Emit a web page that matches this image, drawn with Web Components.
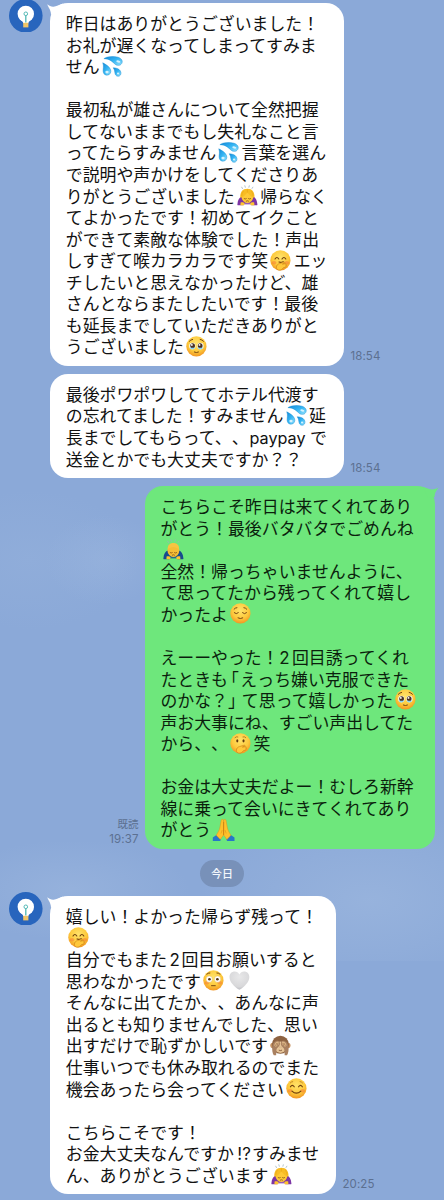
<!DOCTYPE html>
<html lang="ja">
<head>
<meta charset="UTF-8">
<title>トーク</title>
<style>
  body {
    margin: 0;
    width: 444px;
    height: 1200px;
    overflow: hidden;
    background: #8ba9d8;
  }
</style>
</head>
<body>
<chat-room>
  <chat-message avatar tail time="18:54" style="--w: 294.6px">昨日はありがとうございました！<br>お礼が遅くなってしまってすみま<br>せん<emo-ji name="sweat"></emo-ji><br><br>最初私が雄さんについて全然把握<br>してないままでもし失礼なこと言<br>ってたらすみません<emo-ji name="sweat"></emo-ji>言葉を選ん<br>で説明や声かけをしてくださりあ<br>りがとうございました<emo-ji name="bow-woman"></emo-ji>帰らなく<br>てよかったです！初めてイクこと<br>ができて素敵な体験でした！声出<br>しすぎて喉カラカラです笑<emo-ji name="giggle"></emo-ji>エッ<br>チしたいと思えなかったけど、雄<br>さんとならまたしたいです！最後<br>も延長までしていただきありがと<br>うございました<emo-ji name="tearful"></emo-ji></chat-message>
  <chat-message time="18:54" style="--w: 294.6px">最後ポワポワしててホテル代渡す<br>の忘れてました！すみません<emo-ji name="sweat"></emo-ji>延<br>長までしてもらって、、<chat-latin style="--l: 1px; --r: 4.5px; font-size: 16.2px">paypay</chat-latin>で<br>送金とかでも大丈夫ですか？？</chat-message>
  <chat-message mine tail time="19:37" read="既読" style="--w: 290.3px">こちらこそ昨日は来てくれてあり<br>がとう！最後バタバタでごめんね<br><emo-ji name="bow-man"></emo-ji><br>全然！帰っちゃいませんように、<br>て思ってたから残ってくれて嬉し<br>かったよ<emo-ji name="relieved"></emo-ji><br><br>えーーやった！<chat-latin style="--l: .5px; --r: 2.5px">2</chat-latin>回目誘ってくれ<br>たときも<chat-latin style="--l: -6px; --r: 1.5px">「</chat-latin>えっち嫌い克服できた<br>のかな？<chat-latin style="--l: 0px; --r: -3px">」</chat-latin>て思って嬉しかった<emo-ji name="tearful"></emo-ji><br>声お大事にね、すごい声出してた<br>から、、<emo-ji name="gasp"></emo-ji>笑<br><br>お金は大丈夫だよー！むしろ新幹<br>線に乗って会いにきてくれてあり<br>がとう<emo-ji name="pray"></emo-ji></chat-message>
  <chat-date>今日</chat-date>
  <chat-message avatar tail time="20:25" style="--w: 286.6px">嬉しい！よかった帰らず残って！<br><emo-ji name="giggle"></emo-ji><br>自分でもまた<chat-latin style="--l: 2.5px; --r: 1.5px">2</chat-latin>回目お願いすると<br>思わなかったです<emo-ji name="flushed"></emo-ji><emo-ji name="heart"></emo-ji><br>そんなに出てたか、、あんなに声<br>出るとも知りませんでした、思い<br>出すだけで恥ずかしいです<emo-ji name="monkey"></emo-ji><br>仕事いつでも休み取れるのでまた<br>機会あったら会ってください<emo-ji name="smile"></emo-ji><br><br>こちらこそです！<br>お金大丈夫なんですか<chat-latin style="--l: 3.5px; --r: 1.2px">!?</chat-latin>すみませ<br>ん、ありがとうございます<emo-ji name="bow-woman"></emo-ji></chat-message>
</chat-room>

<script>
// ---- emoji drawings, all on a 22x22 canvas ----
const FACE = `
  <defs>
    <radialGradient id="f" cx=".5" cy=".35" r=".68">
      <stop offset="0" stop-color="#ffe36b"/><stop offset=".6" stop-color="#fdc93c"/><stop offset="1" stop-color="#f0901f"/>
    </radialGradient>
  </defs>
  <circle cx="11" cy="11" r="10.7" fill="url(#f)"/>`;

const HAND = `
  <path d="M6.8 18.3c0-2 1.2-3.4 3.2-3.9l5-1.5c.9-.2 1.1.8.3 1.1l-2.2.9 3.4-.4c.9 0 .9 1 .1 1.2 1 0 1 1.2 0 1.3.7.2.6 1-.1 1.1l-2.2.5c-1.2 2-3.2 3-5 2.7-1.7-.3-2.5-1.5-2.5-3z" fill="#ffc83a" stroke="#c77a14" stroke-width=".6"/>`;

const CHEEKS = `<ellipse cx="4.3" cy="13.5" rx="2.5" ry="1.8" fill="#f4653a" opacity=".4"/><ellipse cx="17.7" cy="13.5" rx="2.5" ry="1.8" fill="#f4653a" opacity=".4"/>`;

const bow = (sleeve, hair, face) => `
  <g stroke="#9bb0bb" stroke-width=".8" stroke-linecap="round"><path d="M5 2.3l.8 1.5M8.3.8l.5 1.6M13 .8l-.4 1.6M16.8 2.3l-.9 1.4"/></g>
  <path d="M5.5 12C2.5 13 .8 16 .4 20.5c0 .8.5 1 1.2 1h5.2l2-4zM16.5 12c3 1 4.7 4 5.1 8.5 0 .8-.5 1-1.2 1h-5.2l-2-4z" fill="${sleeve}"/>
  <path d="M6 17h10v3.5H6z" fill="${sleeve}" opacity=".8"/>
  <path d="M3.8 18.6c1.5-.5 3.5-.2 4.2.8l-.5 2H3.6zM18.2 18.6c-1.5-.5-3.5-.2-4.2.8l.5 2h3.9z" fill="#ffc52f"/>
  <ellipse cx="11" cy="11.8" rx="6.3" ry="7.3" fill="${face}"/>
  ${hair}
  <path d="M7.6 14.5q1.1.8 2.2 0M12.2 14.5q1.1.8 2.2 0M9.8 17q1.2-.8 2.4 0" fill="none" stroke="#7b4a13" stroke-width=".8" stroke-linecap="round"/>`;

const EMOJI = {
  sweat: `
    <defs><linearGradient id="d" x1="0" y1="0" x2="1" y2="1"><stop offset="0" stop-color="#1488d8"/><stop offset=".5" stop-color="#35b5f3"/><stop offset="1" stop-color="#95e2fd"/></linearGradient></defs>
    <g fill="url(#d)" stroke="#168ed5" stroke-width=".5">
      <path d="M2 2.8C5 .5 12-.2 17 1.3c4 1.3 5.3 4.3 3.8 6.7-1.6 2.6-5 2.3-7 .6C11 6.2 8.5 3 2 2.8z"/>
      <path d="M.8 7.2c3.2 1.7 7 4 8.2 7 1 2.7-.3 5.5-2.8 6-2.8.6-4.9-1.4-5-4.2-.1-2.8 1-5.3-.4-8.8z"/>
      <path d="M11.8 12.5c3 0 6 .9 7.5 3.1 1.3 2 .9 4.7-1 5.6-2.1.9-4.1-.5-4.5-2.6-.4-2.3-.5-4.5-2-6.1z"/>
    </g>
    <g fill="#e3f8ff" opacity=".9"><ellipse cx="17.3" cy="5.8" rx="2.2" ry="1.2" transform="rotate(15 17.3 5.8)"/><ellipse cx="5.3" cy="17" rx="1.8" ry="1.4"/><ellipse cx="17" cy="18.5" rx="1.2" ry="1"/></g>`,

  'bow-woman': bow('#7d35a5', '<path d="M3.5 13.5C3 7.5 6 4 11 4s8 3.5 7.5 9.5c-2.5-.3-5-2.3-7.5-5.5-2.5 3.2-5 5.2-7.5 5.5z" fill="#f8bd24"/><path d="M11 4.5V8M7 6.5q-2 2-2 5M15 6.5q2 2 2 5" stroke="#e19a13" stroke-width=".5" fill="none"/>', '#ffc936'),
  'bow-man': bow('#174b8e', '<path d="M5 10.5C5 6.5 7.5 4.3 11 4.3s6 2.2 6 6.2c-3-1-4-2-6-2s-3 1-6 2z" fill="#f8c443"/>', '#f6bd36'),

  giggle: FACE + CHEEKS + `
    <path d="M5.3 9.5q2-3.2 4 0M12.7 9.5q2-3.2 4 0M9.6 12.6q2.3 1 4.3-.3" fill="none" stroke="#70400e" stroke-width="1.2" stroke-linecap="round"/>` + HAND,

  gasp: FACE + `
    <ellipse cx="7.7" cy="8.3" rx="1.1" ry="1.8" fill="#60380f"/><ellipse cx="14.3" cy="8.3" rx="1.1" ry="1.8" fill="#60380f"/>
    <path d="M5.3 4.9q1.5-1.5 3-.8M13.7 4.1q1.8-.6 3 .8" fill="none" stroke="#9b6418" stroke-width=".8" stroke-linecap="round"/>` + HAND,

  tearful: FACE + `
    <ellipse cx="6.7" cy="10.7" rx="3.3" ry="3.5" fill="#f5fbff"/><ellipse cx="15.3" cy="10.7" rx="3.3" ry="3.5" fill="#f5fbff"/>
    <ellipse cx="7" cy="10.4" rx="2.5" ry="2.8" fill="#4b3022"/><ellipse cx="15" cy="10.4" rx="2.5" ry="2.8" fill="#4b3022"/>
    <path d="M3.9 11.8q2.9 1.4 5.7 0-.6 2.5-2.9 2.5t-2.8-2.5zM12.4 11.8q2.9 1.4 5.7 0-.6 2.5-2.9 2.5t-2.8-2.5z" fill="#88d3f4"/>
    <circle cx="6.2" cy="9.4" r="1" fill="#fff"/><circle cx="14.3" cy="9.4" r="1" fill="#fff"/>
    <path d="M3.5 5.6q1.5-1.7 3.5-2M15 3.6q2 .3 3.5 2M8.8 17q2.2 1.2 4.4 0" fill="none" stroke="#70400e" stroke-width="1" stroke-linecap="round"/>`,

  relieved: FACE + `
    <path d="M4.5 10.3q2.1 2.2 4.3 0M13.2 10.3q2.1 2.2 4.3 0M8.5 15.8q2.5 1.5 5 0M4.3 6.5q1.2-1.5 3-1.6M14.7 4.9q1.8.1 3 1.6" fill="none" stroke="#70400e" stroke-width="1" stroke-linecap="round"/>`,

  flushed: FACE + CHEEKS + `
    <circle cx="6.6" cy="9.7" r="3.3" fill="#fff" stroke="#d59a36" stroke-width=".3"/><circle cx="15.4" cy="9.7" r="3.3" fill="#fff" stroke="#d59a36" stroke-width=".3"/>
    <circle cx="6.8" cy="9.8" r="1.4" fill="#583613"/><circle cx="15.2" cy="9.8" r="1.4" fill="#583613"/>
    <path d="M4 4.4q1.5-1.5 3.3-1.3M14.7 3.1q1.8-.2 3.3 1.3M9 16.6h4" fill="none" stroke="#70400e" stroke-width="1" stroke-linecap="round"/>`,

  smile: FACE + CHEEKS + `
    <path d="M4.7 9.3q2-3 4 0M13.3 9.3q2-3 4 0M6.3 13.8q4.7 4.6 9.4 0" fill="none" stroke="#70400e" stroke-width="1.2" stroke-linecap="round"/>
    <path d="M4.5 5.2q1-1.3 2.6-1.4M14.9 3.8q1.6.1 2.6 1.4" fill="none" stroke="#a76618" stroke-width=".7" stroke-linecap="round"/>`,

  heart: `
    <defs><radialGradient id="h" cx=".5" cy=".3" r=".75"><stop offset="0" stop-color="#e8e8e9"/><stop offset=".7" stop-color="#d8d8da"/><stop offset="1" stop-color="#b6b7bc"/></radialGradient></defs>
    <path d="M11 21C5.5 17.5.5 12.5.5 7.3.5 3.8 3 1.5 6 1.5c2.2 0 4 1.3 5 3.3 1-2 2.8-3.3 5-3.3 3 0 5.5 2.3 5.5 5.8C21.5 12.5 16.5 17.5 11 21z" fill="url(#h)"/>`,

  monkey: `
    <circle cx="3" cy="11" r="2.7" fill="#c79261"/><circle cx="19" cy="11" r="2.7" fill="#c79261"/>
    <ellipse cx="11" cy="10.3" rx="9" ry="9.6" fill="#8d6240"/>
    <path d="M5 10q6-6 12 0 2 8-6 9-8-1-6-9z" fill="#e6c497"/>
    <path d="M4 21.5c-1.5-2-2-6-1.5-9.5C3 8 6 5.5 9 6.3c2 .8 2 4 .5 5.7-1.3 1.5-2.5 2-2.7 4l-.3 5.5zM18 21.5c1.5-2 2-6 1.5-9.5C19 8 16 5.5 13 6.3c-2 .8-2 4-.5 5.7 1.3 1.5 2.5 2 2.7 4l.3 5.5z" fill="#a98060"/>
    <path d="M4.5 11Q5 7.3 9 7l.5 2.5Q7.5 12 6 12.5zM17.5 11Q17 7.3 13 7l-.5 2.5q2 2.5 3.5 3z" fill="#dcb586"/>
    <path d="M5.7 11.5l1.6-3M7.5 11.5l1-3M16.3 11.5l-1.6-3M14.5 11.5l-1-3" stroke="#805635" stroke-width=".5"/>
    <path d="M9.3 16q1.7 1 3.4 0" fill="none" stroke="#74482c" stroke-width=".8"/>
    <path d="M10.3 12.8h.3M11.5 12.8h.3" stroke="#74482c" stroke-width=".7"/>`,

  pray: `
    <path d="M.3 18.5l4-2.7 4.3 4.7-1 1.5H.3zM22 18.5l-4-2.7-4.3 4.7 1 1.5H22z" fill="#2777c8"/>
    <path d="M10.9 1.5C10.8-.2 9 .1 8.7 1.4L7.3 9c-.3 1.8-2 4.8-3.5 7.3l4 4.2 3.3-4.6zM11.3 1.5c.1-1.7 1.9-1.4 2.2-.1L14.9 9c.3 1.8 2 4.8 3.5 7.3l-4 4.2-3.3-4.6z" fill="#ffc12b" stroke="#e39317" stroke-width=".5"/>
    <path d="M11.1 3v13" stroke="#c77911" stroke-width=".7"/>
    <path d="M9.7 11l-1.2 3.5M12.5 11l1.2 3.5" stroke="#e39317" stroke-width=".6"/>`
};

class EmoJi extends HTMLElement {
  constructor() {
    super();
    const name = this.getAttribute("name");
    this.attachShadow({ mode: "open" }).innerHTML = `
      <style>
        :host { display: inline-block; vertical-align: top; width: 25.5px; height: 21.55px; }
        svg { display: block; width: 20.8px; height: 20.8px; margin: .4px 0 0 2.2px; overflow: visible; }
        svg.pray { width: 23px; height: 22px; margin: .6px 0 0 1px; }
      </style>
      <svg class="${name}" viewBox="0 0 22 22">${EMOJI[name]}</svg>`;
  }
}
customElements.define("emo-ji", EmoJi);

// Short runs that need their own side bearings inside Japanese text.
// The markup starts right at the backtick: a leading newline would show as a space.
class ChatLatin extends HTMLElement {
  constructor() {
    super();
    this.attachShadow({ mode: "open" }).innerHTML = `<style>
        :host {
          display: inline;
          margin-left: var(--l, 0);
          margin-right: var(--r, 0);
          font-family: Inter, "Noto Sans CJK JP", sans-serif;
          line-height: 0;
        }
      </style><slot></slot>`;
  }
}
customElements.define("chat-latin", ChatLatin);

class ChatAvatar extends HTMLElement {
  constructor() {
    super();
    this.attachShadow({ mode: "open" }).innerHTML = `
      <style>
        :host { display: block; width: 33.6px; height: 33.6px; }
        svg { display: block; }
      </style>
      <svg width="33.6" height="33.6" viewBox="0 0 33.6 33.6">
        <circle cx="16.8" cy="16.8" r="16.8" fill="#2865bd"/>
        <circle cx="16.8" cy="14.9" r="8.2" fill="#fff"/>
        <path d="M10.3 19.5l3.5 3.2.4 1.6h5.200l.4-1.600 3.500-3.200z" fill="#fff"/>
        <circle cx="16.8" cy="14.8" r="1.8" fill="none" stroke="#50b8b4" stroke-width="1"/>
        <path d="M16.8 16.600v7" stroke="#50b8b4" stroke-width="1.3"/>
        <path d="M14.2 23.8h5.200v4.600h-5.200z" fill="#f1c567"/>
      </svg>`;
  }
}
customElements.define("chat-avatar", ChatAvatar);

class ChatMessage extends HTMLElement {
  constructor() {
    super();
    const mine = this.hasAttribute("mine");
    const read = this.getAttribute("read");
    const tail = mine
      ? '<svg class="tail" width="16" height="14" viewBox="0 0 16 14"><path d="M0 1C4 2 7 4 10 3.5 12 3 14 2.5 15.5 1.5 14.5 3.5 11.5 6 11.7 11L5 12z"/></svg>'
      : '<svg class="tail" width="16" height="14" viewBox="0 0 16 14"><path d="M16 .5C12 1.5 9 4 6 3.7 4 3.5 2 2.7.3 1.3 1.2 4.5 4 7 4 11.5L10 13z"/></svg>';
    this.attachShadow({ mode: "open" }).innerHTML = `
      <style>
        :host { display: flex; align-items: flex-end; padding-left: 9.2px; }
        :host([mine]) { flex-direction: row-reverse; padding: 0 9.2px 0 0; }
        .side { width: 40.7px; align-self: flex-start; }
        .side chat-avatar { margin-top: -4.5px; }
        .bubble {
          position: relative;
          box-sizing: border-box;
          width: var(--w);
          padding: 9px 0 9px 15.9px;
          border-radius: 18px;
          background: #fff;
          color: #111;
          white-space: nowrap;
        }
        :host([mine]) .bubble { background: #6ee77c; color: #0b1f0d; }
        .tail { position: absolute; top: 0; left: -3.2px; fill: #fff; }
        :host([mine]) .tail { left: auto; right: -4px; fill: #6ee77c; }
        .meta {
          margin: 0 6px 3.2px;
          font: 11.5px/14px Inter, "Noto Sans CJK JP", sans-serif;
          color: #5c7091;
          letter-spacing: .1px;
        }
        :host([mine]) .meta { text-align: right; }
        .read { font-size: 10.5px; letter-spacing: 0; }
      </style>
      ${mine ? "" : `<div class="side">${this.hasAttribute("avatar") ? "<chat-avatar></chat-avatar>" : ""}</div>`}
      <div class="bubble">${this.hasAttribute("tail") ? tail : ""}<slot></slot></div>
      <div class="meta">${read ? `<div class="read">${read}</div>` : ""}<div>${this.getAttribute("time")}</div></div>`;
  }
}
customElements.define("chat-message", ChatMessage);

class ChatDate extends HTMLElement {
  constructor() {
    super();
    this.attachShadow({ mode: "open" }).innerHTML = `
      <style>
        :host {
          display: block;
          align-self: center;
          margin: 2.8px 0 1.5px;
          padding: 0 10.8px;
          border-radius: 14px;
          background: #7891b9;
          color: #f3f7fc;
          font-size: 11px;
          font-weight: 500;
          line-height: 27px;
        }
      </style><slot></slot>`;
  }
}
customElements.define("chat-date", ChatDate);

class ChatRoom extends HTMLElement {
  constructor() {
    super();
    this.attachShadow({ mode: "open" }).innerHTML = `
      <style>
        :host {
          display: flex;
          flex-direction: column;
          gap: 8px;
          box-sizing: border-box;
          width: 444px;
          height: 1200px;
          padding-top: 3.2px;
          /* hazy sky wallpaper */
          background:
            radial-gradient(ellipse 60px 45px at 105px 560px, rgba(165,190,226,.3), transparent),
            radial-gradient(ellipse 110px 70px at 30px 560px, rgba(155,182,222,.3), transparent),
            radial-gradient(ellipse 170px 90px at 370px 900px, rgba(165,190,226,.45), transparent) 0 0 / 444px 961px no-repeat,
            radial-gradient(ellipse 120px 50px at 70px 890px, rgba(165,190,226,.4), transparent),
            #8ba9d8;
          font-family: "Noto Sans CJK JP", sans-serif;
          font-size: 16.9px;
          line-height: 21.55px;
          text-spacing-trim: space-all;
          text-autospace: no-autospace;
        }
      </style><slot></slot>`;
  }
}
customElements.define("chat-room", ChatRoom);
</script>
</body>
</html>
